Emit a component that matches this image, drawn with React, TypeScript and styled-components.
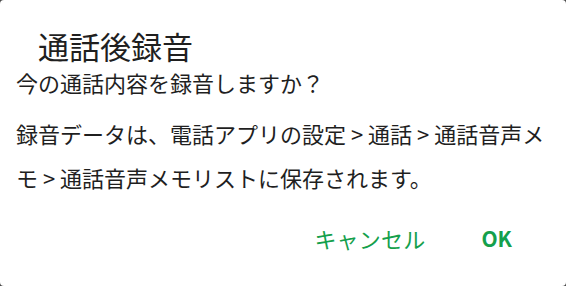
import React from 'react';
import styled, { createGlobalStyle } from 'styled-components';

const GlobalStyle = createGlobalStyle`
  html, body {
    margin: 0;
    padding: 0;
    background: #4a4a4a;
  }
  body {
    font-family: "Noto Sans CJK JP", "Noto Sans", sans-serif;
  }
`;

const Dialog = styled.div`
  width: 566px;
  height: 286px;
  box-sizing: border-box;
  background: #ffffff;
  border-radius: 4px;
  padding: 26px 16px 0;
  display: flex;
  flex-direction: column;
  color: #1f1f1f;
`;

const Title = styled.h1`
  margin: 0;
  padding-left: 22px;
  font-size: 31px;
  font-weight: 400;
  line-height: 40px;
`;

const Message = styled.p`
  margin: 0;
  font-size: 22px;
  line-height: 32px;
`;

const Body = styled.p`
  margin: 13px 0 0;
  font-size: 22px;
  line-height: 44px;
`;

const Actions = styled.div`
  display: flex;
  justify-content: flex-end;
  gap: 56px;
  margin-top: 19px;
  padding-right: 38px;
`;

const ActionButton = styled.button<{ $bold?: boolean }>`
  border: none;
  background: transparent;
  padding: 0;
  font-family: inherit;
  font-size: ${(p) => (p.$bold ? '21px' : '22px')};
  font-weight: ${(p) => (p.$bold ? 700 : 400)};
  letter-spacing: ${(p) => (p.$bold ? '0' : '0.2px')};
  line-height: 40px;
  color: #14a04c;
  cursor: pointer;
`;

export default function App() {
  return (
    <>
      <GlobalStyle />
      <Dialog>
        <Title>通話後録音</Title>
        <Message>今の通話内容を録音しますか？</Message>
        <Body>
          録音データは、電話アプリの設定 &gt; 通話 &gt; 通話音声メモ &gt; 通話音声メモリストに保存されます。
        </Body>
        <Actions>
          <ActionButton>キャンセル</ActionButton>
          <ActionButton $bold>OK</ActionButton>
        </Actions>
      </Dialog>
    </>
  );
}
